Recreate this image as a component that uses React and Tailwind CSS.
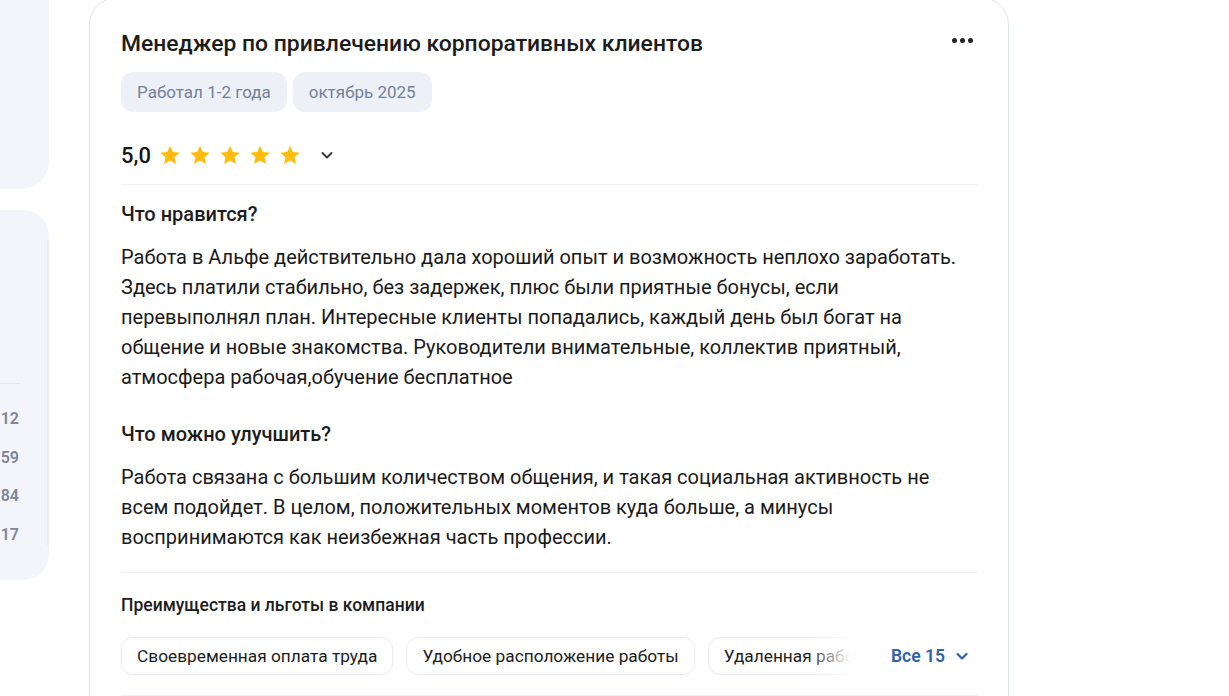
import React from 'react';

// звезда рейтинга
const StarIcon = () => (
  <svg width="22" height="22" viewBox="0 0 24 24" className="shrink-0">
    <path
      d="M12 1.8l3.05 6.9 7.5.72-5.65 4.98 1.66 7.36L12 17.9l-6.56 3.86 1.66-7.36L1.45 9.42l7.5-.72z"
      fill="#FFBC0D"
    />
  </svg>
);

const Chevron = ({ className = '', color = '#3a3a3a', width = 2 }) => (
  <svg width="16" height="16" viewBox="0 0 16 16" className={className}>
    <path d="M3.5 6l4.5 4.5L12.5 6" fill="none" stroke={color} strokeWidth={width} strokeLinecap="round" strokeLinejoin="round" />
  </svg>
);

const tags = ['Работал 1-2 года', 'октябрь 2025'];
const benefits = ['Своевременная оплата труда', 'Удобное расположение работы', 'Удаленная работа'];
const sideNumbers = ['12', '59', '84', '17'];

const App = () => {
  return (
    <div className="w-[1229px] h-[696px] overflow-hidden bg-white font-['Roboto','Noto_Sans',sans-serif] text-[#1f1f1f]">
      <div className="flex items-start gap-[40px] -mt-[3px]">
        {/* Левая колонка (обрезана) */}
        <div className="w-[49px] shrink-0 flex flex-col gap-[21px]">
          <div className="h-[192px] bg-[#f3f5fa] rounded-br-[28px]"></div>
          <div className="h-[370px] bg-[#f3f5fa] rounded-r-[26px] flex">
            <div className="flex-1 flex flex-col pt-[173px]">
              <div className="h-px bg-[#e4e7ee] w-[20px]"></div>
              <div className="flex flex-col pt-[25px] gap-[18.5px]">
                {sideNumbers.map((n) => (
                  <div key={n} className="text-right pr-[28px] text-[16px] leading-[20px] font-semibold text-[#7c8699] overflow-hidden whitespace-nowrap">
                    {n}
                  </div>
                ))}
              </div>
            </div>
            <div className="w-[2px] bg-[#eaecf0] mt-[30px] mb-[35px]"></div>
          </div>
        </div>

        {/* Карточка отзыва */}
        <div className="w-[920px] shrink-0 border border-[#dfe3eb] rounded-[28px] px-[31px] pt-[31px] pb-[40px]">
          <div className="flex items-start justify-between">
            <h2 className="text-[22.9px] leading-[30px] font-medium text-[#1c1c1c]">
              Менеджер по привлечению корпоративных клиентов
            </h2>
            <div className="flex items-center gap-[3px] mt-[9px] mr-[4px]">
              <span className="w-[5px] h-[5px] rounded-full bg-[#222]"></span>
              <span className="w-[5px] h-[5px] rounded-full bg-[#222]"></span>
              <span className="w-[5px] h-[5px] rounded-full bg-[#222]"></span>
            </div>
          </div>

          <div className="flex gap-[6px] mt-[13px]">
            {tags.map((t) => (
              <span key={t} className="h-[40px] px-[16px] pt-[2px] flex items-center rounded-[12px] bg-[#edf0f6] text-[17px] text-[#74829a]">
                {t}
              </span>
            ))}
          </div>

          <div className="flex items-center h-[32px] mt-[27px]">
            <span className="text-[22px] font-medium text-[#161616] mr-[8px]">5,0</span>
            <div className="flex items-center gap-[8px]">
              {[0, 1, 2, 3, 4].map((i) => (
                <StarIcon key={i} />
              ))}
            </div>
            <Chevron className="ml-[18px]" />
          </div>

          <div className="h-px bg-[#eef0f4] mt-[13px]"></div>

          <h3 className="mt-[17px] text-[20px] leading-[24px] font-medium text-[#1c1c1c]">Что нравится?</h3>
          <p className="mt-[16px] text-[20px] leading-[30px] text-[#1a1a1a]">
            Работа в Альфе действительно дала хороший опыт и возможность неплохо заработать. Здесь платили стабильно, без задержек, плюс были приятные бонусы, если перевыполнял план. Интересные клиенты попадались, каждый день был богат на общение и новые знакомства. Руководители внимательные, коллектив приятный, атмосфера рабочая,обучение бесплатное
          </p>

          <h3 className="mt-[30px] text-[20px] leading-[24px] font-medium text-[#1c1c1c]">Что можно улучшить?</h3>
          <p className="mt-[16px] text-[20px] leading-[30px] text-[#1a1a1a]">
            Работа связана с большим количеством общения, и такая социальная активность не всем подойдет. В целом, положительных моментов куда больше, а минусы воспринимаются как неизбежная часть профессии.
          </p>

          <div className="h-px bg-[#eef0f4] mt-[20px]"></div>

          <h4 className="mt-[22px] text-[17.5px] leading-[20px] font-medium text-[#1c1c1c]">Преимущества и льготы в компании</h4>

          <div className="flex items-center mt-[22px]">
            <div className="relative w-[730px] overflow-hidden">
              <div className="flex gap-[13px]">
                {benefits.map((b) => (
                  <span key={b} className="h-[38px] px-[15px] pt-[1px] flex items-center shrink-0 rounded-[12px] border border-[#e8ebf2] text-[17.3px] text-[#1c1c1c] whitespace-nowrap">
                    {b}
                  </span>
                ))}
              </div>
              <div className="absolute right-0 top-0 h-full w-[44px] bg-gradient-to-r from-white/0 to-white"></div>
            </div>
            <button className="ml-[40px] flex items-center gap-[9px] text-[17.5px] font-semibold text-[#3262a8]">
              Все 15
              <Chevron color="#3262a8" width={2.3} />
            </button>
          </div>

          <div className="h-px bg-[#eef0f4] mt-[20px]"></div>
        </div>
      </div>
    </div>
  );
};

export default App;
